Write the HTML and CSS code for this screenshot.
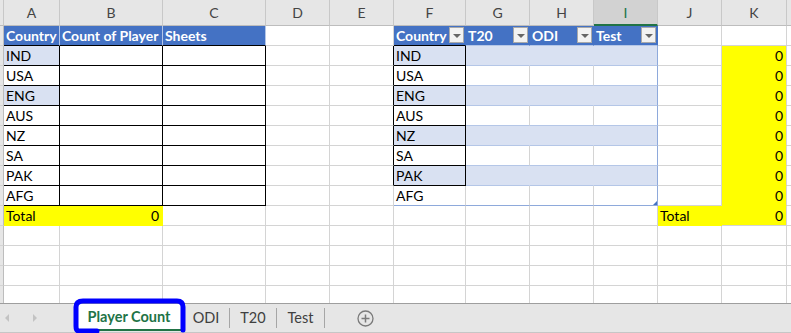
FILE: index.html
```html
<!DOCTYPE html>
<html lang="en">
<head>
    <meta charset="UTF-8">
    <title>Player Count</title>
    <link rel="stylesheet" href="styles.css">
</head>
<body>
<div class="sheet">
    <div class="row letters">
        <div class="c g"></div>
        <div class="c">A</div><div class="c">B</div><div class="c">C</div><div class="c">D</div>
        <div class="c">E</div><div class="c">F</div><div class="c">G</div><div class="c">H</div>
        <div class="c sel">I</div><div class="c">J</div><div class="c">K</div><div class="c end"></div>
    </div>

    <div class="row">
        <div class="c g"></div>
        <div class="c th">Country</div><div class="c th">Count of Player</div><div class="c th">Sheets</div>
        <div class="c"></div><div class="c"></div>
        <div class="c tf first">Country<span class="drop"></span></div>
        <div class="c tf">T20<span class="drop"></span></div>
        <div class="c tf">ODI<span class="drop"></span></div>
        <div class="c tf">Test<span class="drop"></span></div>
        <div class="c"></div><div class="c"></div><div class="c end"></div>
    </div>

    <div class="row">
        <div class="c g"></div>
        <div class="c bx lb">IND</div><div class="c bx"></div><div class="c bx"></div>
        <div class="c"></div><div class="c br"></div>
        <div class="c bx lb">IND</div><div class="c bd"></div><div class="c bd"></div><div class="c bd ie"></div>
        <div class="c"></div><div class="c y num">0</div><div class="c end"></div>
    </div>
    <div class="row">
        <div class="c g"></div>
        <div class="c bx">USA</div><div class="c bx"></div><div class="c bx"></div>
        <div class="c"></div><div class="c br"></div>
        <div class="c bx">USA</div><div class="c tw"></div><div class="c tw"></div><div class="c tw ie"></div>
        <div class="c"></div><div class="c y num">0</div><div class="c end"></div>
    </div>
    <div class="row">
        <div class="c g"></div>
        <div class="c bx lb">ENG</div><div class="c bx"></div><div class="c bx"></div>
        <div class="c"></div><div class="c br"></div>
        <div class="c bx lb">ENG</div><div class="c bd"></div><div class="c bd"></div><div class="c bd ie"></div>
        <div class="c"></div><div class="c y num">0</div><div class="c end"></div>
    </div>
    <div class="row">
        <div class="c g"></div>
        <div class="c bx">AUS</div><div class="c bx"></div><div class="c bx"></div>
        <div class="c"></div><div class="c br"></div>
        <div class="c bx">AUS</div><div class="c tw"></div><div class="c tw"></div><div class="c tw ie"></div>
        <div class="c"></div><div class="c y num">0</div><div class="c end"></div>
    </div>
    <div class="row">
        <div class="c g"></div>
        <div class="c bx">NZ</div><div class="c bx"></div><div class="c bx"></div>
        <div class="c"></div><div class="c br"></div>
        <div class="c bx lb">NZ</div><div class="c bd"></div><div class="c bd"></div><div class="c bd ie"></div>
        <div class="c"></div><div class="c y num">0</div><div class="c end"></div>
    </div>
    <div class="row">
        <div class="c g"></div>
        <div class="c bx">SA</div><div class="c bx"></div><div class="c bx"></div>
        <div class="c"></div><div class="c br"></div>
        <div class="c bx">SA</div><div class="c tw"></div><div class="c tw"></div><div class="c tw ie"></div>
        <div class="c"></div><div class="c y num">0</div><div class="c end"></div>
    </div>
    <div class="row">
        <div class="c g"></div>
        <div class="c bx">PAK</div><div class="c bx"></div><div class="c bx"></div>
        <div class="c"></div><div class="c br"></div>
        <div class="c bx lb">PAK</div><div class="c bd"></div><div class="c bd"></div><div class="c bd ie"></div>
        <div class="c"></div><div class="c y num">0</div><div class="c end"></div>
    </div>
    <div class="row">
        <div class="c g"></div>
        <div class="c bx">AFG</div><div class="c bx"></div><div class="c bx"></div>
        <div class="c"></div><div class="c"></div>
        <div class="c last">AFG</div><div class="c tw last"></div><div class="c tw last"></div><div class="c tw ie last handle"></div>
        <div class="c"></div><div class="c y num">0</div><div class="c end"></div>
    </div>

    <div class="row">
        <div class="c g"></div>
        <div class="c y yr">Total</div><div class="c y yr num">0</div><div class="c"></div>
        <div class="c"></div><div class="c"></div>
        <div class="c"></div><div class="c"></div><div class="c"></div><div class="c"></div>
        <div class="c y yr">Total</div><div class="c y yb num">0</div><div class="c end"></div>
    </div>
    <div class="row">
        <div class="c g"></div>
        <div class="c"></div><div class="c"></div><div class="c"></div><div class="c"></div><div class="c"></div>
        <div class="c"></div><div class="c"></div><div class="c"></div><div class="c"></div><div class="c"></div>
        <div class="c"></div><div class="c end"></div>
    </div>
    <div class="row">
        <div class="c g"></div>
        <div class="c"></div><div class="c"></div><div class="c"></div><div class="c"></div><div class="c"></div>
        <div class="c"></div><div class="c"></div><div class="c"></div><div class="c"></div><div class="c"></div>
        <div class="c"></div><div class="c end"></div>
    </div>
    <div class="row">
        <div class="c g"></div>
        <div class="c"></div><div class="c"></div><div class="c"></div><div class="c"></div><div class="c"></div>
        <div class="c"></div><div class="c"></div><div class="c"></div><div class="c"></div><div class="c"></div>
        <div class="c"></div><div class="c end"></div>
    </div>
    <div class="row">
        <div class="c g"></div>
        <div class="c"></div><div class="c"></div><div class="c"></div><div class="c"></div><div class="c"></div>
        <div class="c"></div><div class="c"></div><div class="c"></div><div class="c"></div><div class="c"></div>
        <div class="c"></div><div class="c end"></div>
    </div>
</div>

<div class="tabs">
    <div class="nav">
        <span class="arrow left"></span>
        <span class="arrow right"></span>
    </div>
    <div class="tab active">Player Count</div>
    <div class="tab narrow">ODI</div>
    <div class="tab narrow">T20</div>
    <div class="tab wide">Test</div>
    <div class="add">
        <svg width="17" height="17" viewBox="0 0 17 17">
            <circle cx="8.5" cy="8.5" r="7.5" fill="none" stroke="#7a7a7a" stroke-width="1.3"/>
            <path d="M8.5 4.5v8M4.5 8.5h8" stroke="#7a7a7a" stroke-width="1.5"/>
        </svg>
    </div>
    <svg class="marker" width="120" height="40" viewBox="0 0 120 40">
        <path d="M26 33 L8 33 Q5 33 5 28 L5 9 Q5 3 12 3 L106 3 Q112 3 112 9 L112 32"
              fill="none" stroke="#0000ff" stroke-width="5" stroke-linecap="round" stroke-linejoin="round"/>
    </svg>
</div>
</body>
</html>
```

FILE: styles.css
```css
body {
    margin: 0;
    font-family: Lato, "Liberation Sans", sans-serif;
    font-size: 14px;
    color: #000;
    background: #fff;
    width: 791px;
    height: 333px;
    overflow: hidden;
}
.sheet {
    height: 303px;
    overflow: hidden;
}
.row {
    display: grid;
    grid-template-columns: 4px 56px 103px 103px 64px 64px 72px 64px 64px 64px 64px 65px 1fr;
    height: 20px;
}
.c {
    box-sizing: border-box;
    border-right: 1px solid #d4d4d4;
    border-bottom: 1px solid #d4d4d4;
    padding: 0 2px;
    line-height: 19px;
    white-space: nowrap;
    overflow: hidden;
}
.c.end {
    border-right: none;
}
.c.g {
    background: #e6e6e6;
    border-right-color: #bdbdbd;
    padding: 0;
}
.letters {
    height: 26px;
}
.letters .c {
    background: #e6e6e6;
    color: #444;
    text-align: center;
    line-height: 26px;
    border-right-color: #c8c8c8;
    border-bottom-color: #bdbdbd;
}
.letters .sel {
    background: #d2d2d2;
    color: #217346;
    border-bottom: 2px solid #217346;
    line-height: 25px;
}
.th, .tf {
    background: #4472c4;
    color: #fff;
    font-weight: bold;
    border-right-color: #b4c6e7;
    border-bottom-color: #000;
}
.tf {
    display: flex;
    justify-content: space-between;
    border-right-color: #4472c4;
    border-bottom-color: #b4c6e7;
    padding-right: 1px;
}
.tf.first {
    border-bottom-color: #000;
}
.drop {
    box-sizing: border-box;
    width: 15px;
    height: 16px;
    margin-top: 1px;
    border: 1px solid #a9a9a9;
    background: #f2f2f2;
    position: relative;
}
.drop::after {
    content: "";
    position: absolute;
    left: 3px;
    top: 6px;
    border-left: 4px solid transparent;
    border-right: 4px solid transparent;
    border-top: 4px solid #666;
}
.bx {
    border-right-color: #000;
    border-bottom-color: #000;
}
.br {
    border-right-color: #000;
}
.lb {
    background: #d9e1f2;
}
.bd {
    background: #d9e1f2;
    border-right-color: #d9e1f2;
    border-bottom-color: #b4c6e7;
}
.tw {
    border-bottom-color: #b4c6e7;
}
.ie {
    border-right-color: #8ea9db;
}
.last {
    border-bottom-color: #8ea9db;
}
.handle {
    position: relative;
}
.handle::after {
    content: "";
    position: absolute;
    right: 0;
    bottom: 0;
    border-left: 4px solid transparent;
    border-bottom: 4px solid #4472c4;
}
.y {
    background: #ffff00;
    border-bottom-color: #ffff00;
}
.yr {
    border-right-color: #ffff00;
}
.yb {
    border-bottom-color: #d4d4d4;
}
.num {
    text-align: right;
    padding-right: 3px;
}

.tabs {
    box-sizing: border-box;
    height: 30px;
    background: #e6e6e6;
    border-top: 1px solid #9e9e9e;
    border-bottom: 1px solid #c6c6c6;
    display: flex;
    align-items: center;
    position: relative;
    color: #404040;
    font-size: 14.5px;
}
.nav {
    width: 75px;
    display: flex;
    align-items: center;
}
.arrow {
    width: 0;
    height: 0;
    border-top: 4px solid transparent;
    border-bottom: 4px solid transparent;
}
.arrow.left {
    margin-left: 5px;
    border-right: 4px solid #c3c3c3;
}
.arrow.right {
    margin-left: 24px;
    border-left: 4px solid #c3c3c3;
}
.tab {
    box-sizing: border-box;
    height: 20px;
    line-height: 20px;
    text-align: center;
    border-right: 1px solid #a6a6a6;
}
.tab.narrow {
    width: 47px;
}
.tab.wide {
    width: 48px;
}
.tab.active {
    width: 108px;
    height: 27px;
    align-self: flex-start;
    line-height: 26px;
    background: #fff;
    color: #217346;
    font-weight: bold;
    border-right: none;
    box-shadow: inset 0 -2px 0 #217346;
}
.add {
    margin-left: 32px;
    display: flex;
}
.marker {
    position: absolute;
    left: 71px;
    top: -6px;
}
```
